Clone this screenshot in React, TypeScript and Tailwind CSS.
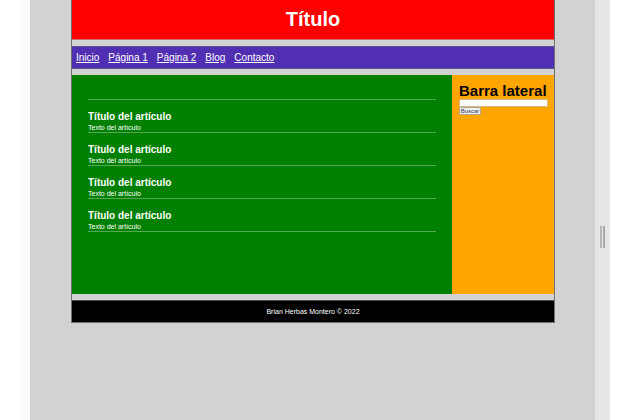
const links = ["Inicio", "Página 1", "Página 2", "Blog", "Contacto"];
const articles = [1, 2, 3, 4];

function Article() {
  return (
    <article className="h-[33px] border-b border-[#55a955] pt-[10px]">
      <h2 className="text-[10px] leading-[14px] font-bold">Título del artículo</h2>
      <p className="text-[7px] leading-[8px]">Texto del artículo</p>
    </article>
  );
}

function Sidebar() {
  return (
    <aside className="w-[102px] shrink-0 bg-[#ffa500] pt-2 pr-[6px] pl-[7px] text-black">
      <h2 className="text-[15px] leading-4 font-bold whitespace-nowrap">Barra lateral</h2>
      <form onSubmit={(e) => e.preventDefault()}>
        <input
          type="text"
          aria-label="Buscar"
          className="block h-2 w-full rounded-[1px] border border-[#d0b88c] bg-white text-[6px]"
        />
        <button
          type="submit"
          className="block h-2 w-[22px] rounded-[1px] border border-[#b0a68f] bg-[#efefef] text-center text-[6px] leading-[6px] text-[#333350]"
        >
          Buscar
        </button>
      </form>
    </aside>
  );
}

export default function App() {
  return (
    <div className="flex min-h-screen bg-white font-['Liberation_Sans',Arial,sans-serif] text-white">
      <div className="w-5 shrink-0" />
      <div className="w-[10px] shrink-0 bg-[#fbfbfa]" />
      <div className="min-w-0 flex-1 bg-[#d2d2d2] pr-10 pl-[41px]">
        <div className="flex flex-col gap-[6px] border-x border-b border-[#707070]">
          <header className="flex h-10 items-center justify-center border-b border-[#d66] bg-[#ff0000] pb-[2px]">
            <h1 className="text-[20px] leading-6 font-bold">Título</h1>
          </header>
          <nav className="flex h-[23px] items-center gap-[9px] border-y border-[#5d5387] bg-[#512fb3] px-1 text-[10px] leading-4">
            {links.map((label) => (
              <a key={label} href="#" className="underline">
                {label}
              </a>
            ))}
          </nav>
          <div className="flex h-[219px]">
            <main className="min-w-0 flex-1 bg-[#008000] px-4 pt-6">
              <hr className="border-t border-[#55a955]" />
              {articles.map((id) => (
                <Article key={id} />
              ))}
            </main>
            <Sidebar />
          </div>
          <footer className="flex h-[22px] items-center justify-center border-t border-[#505050] bg-black text-[7px] leading-[10px]">
            <p>Brian Herbas Montero © 2022</p>
          </footer>
        </div>
      </div>
      <div className="flex w-[15px] shrink-0 justify-center gap-px bg-[#e7e6e7] pt-[226px]">
        <div className="h-[22px] w-[2px] bg-[#b5b5b5]" />
        <div className="h-[22px] w-[2px] bg-[#a9a9a9]" />
      </div>
      <div className="w-7 shrink-0" />
    </div>
  );
}
